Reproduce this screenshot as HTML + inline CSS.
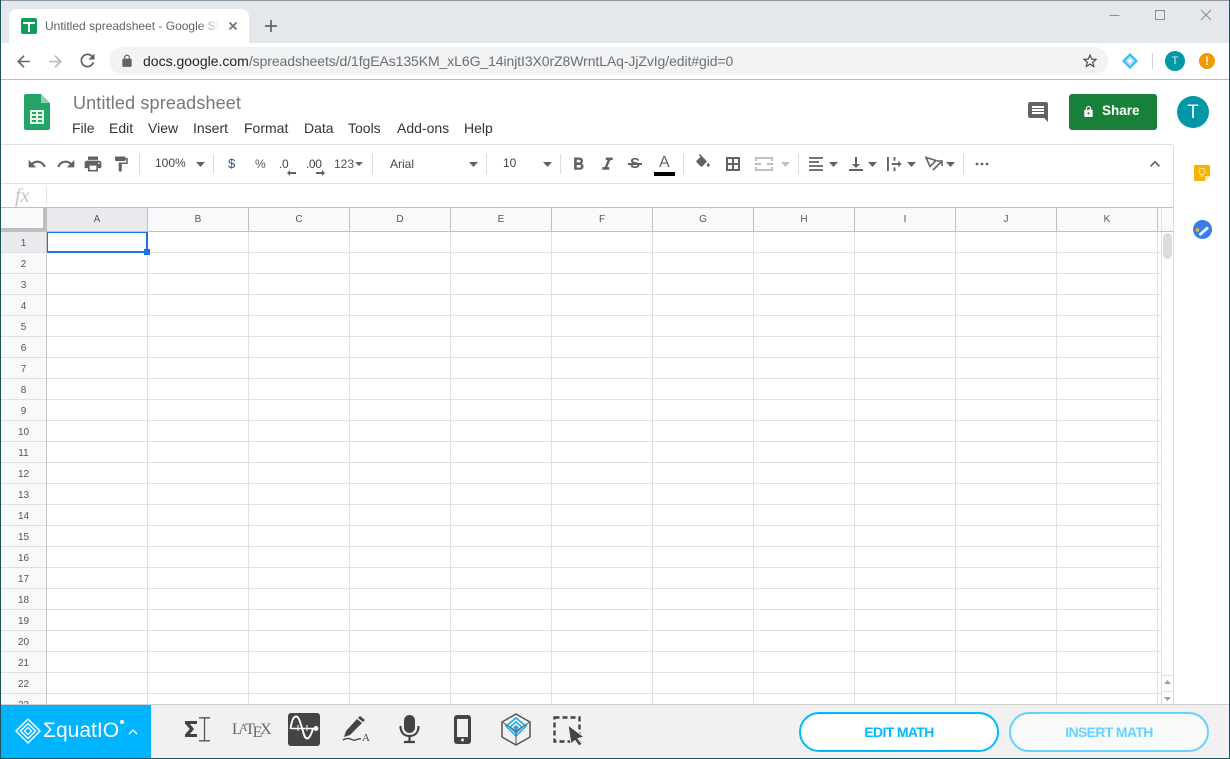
<!DOCTYPE html>
<html><head><meta charset="utf-8"><style>
html,body{margin:0;padding:0;background:#fff}
body{width:1230px;height:759px;position:relative;overflow:hidden;font-family:"Liberation Sans",sans-serif}
.a,svg,.t{position:absolute}
svg{overflow:visible}
.t{white-space:nowrap;line-height:16px}
.m{font-size:14px;color:#333;top:120px}
.sep{position:absolute;width:1px;background:#dadce0;top:154px;height:20px}
.ch{position:absolute;top:208px;height:23px;width:100px;border-right:1px solid #c0c0c0;background:#f8f9fa;text-align:center;font-size:10px;line-height:24px;color:#555}
.r{position:absolute;left:1px;width:45px;height:20px;border-bottom:1px solid #e0e0e0;background:#f8f9fa;text-align:center;font-size:10px;line-height:24px;color:#555}
.btn{position:absolute;top:712px;width:196px;height:36px;border:2px solid #00b9ff;border-radius:20px;background:#fff;color:#00b9ff;font-size:14px;font-weight:bold;text-align:center;line-height:36px;letter-spacing:-.65px}
.g{fill:#5f6368}
</style></head><body>
<div class="a" style="left:0;top:0;width:1230px;height:43px;background:#e4e7eb;border-top:1px solid #8f9a9c;box-sizing:border-box"></div>
<div class="a" style="left:9px;top:9px;width:240px;height:34px;background:#fff;border-radius:8px 8px 0 0"></div>
<div class="a" style="left:21px;top:18px;width:16px;height:16px;background:#0f9d58;border-radius:2px"></div>
<div class="a" style="left:23px;top:22px;width:12px;height:2px;background:#fff"></div>
<div class="a" style="left:28px;top:22px;width:2px;height:10px;background:#fff"></div>
<div class="t" style="left:45px;top:18px;width:175px;overflow:hidden;font-size:12px;color:#5f6368;-webkit-mask-image:linear-gradient(90deg,#000 88%,transparent);mask-image:linear-gradient(90deg,#000 88%,transparent)">Untitled spreadsheet - Google Sheets</div>
<svg style="left:227px;top:20px" width="12" height="12" viewBox="0 0 12 12"><path d="M2.500 2.500l7 7M9.500 2.500l-7 7" stroke="#6b6f73" stroke-width="1.600"/></svg>
<svg style="left:264px;top:19px" width="14" height="14" viewBox="0 0 14 14"><path d="M7 1v12M1 7h12" stroke="#5f6368" stroke-width="1.700"/></svg>
<svg style="left:1100px;top:5px" width="120" height="20" viewBox="0 0 120 20"><path d="M9.500 10.500h10" stroke="#8a8d91"/><rect x="55.500" y="5.500" width="9" height="9" fill="none" stroke="#8a8d91"/><path d="M101 5l10 10M111 5l-10 10" stroke="#8a8d91"/></svg>

<div class="a" style="left:0;top:79px;width:1230px;height:1px;background:#b9bbbd"></div>
<svg style="left:14px;top:52px" width="19" height="19" viewBox="0 0 24 24"><path class="g" d="M20 11H7.830l5.590-5.590L12 4l-8 8 8 8 1.410-1.410L7.830 13H20v-2z"/></svg>
<svg style="left:46px;top:52px" width="19" height="19" viewBox="0 0 24 24"><path fill="#b4b7ba" d="M4 11h12.170l-5.590-5.590L12 4l8 8-8 8-1.410-1.410L16.170 13H4v-2z"/></svg>
<svg style="left:77px;top:50px" width="21" height="21" viewBox="0 0 24 24"><path class="g" d="M17.650 6.350C16.200 4.900 14.210 4 12 4c-4.420 0-7.990 3.580-7.990 8s3.570 8 7.990 8c3.730 0 6.840-2.550 7.730-6h-2.080c-.82 2.330-3.040 4-5.650 4-3.310 0-6-2.690-6-6s2.690-6 6-6c1.660 0 3.140.69 4.220 1.780L13 11h7V4l-2.350 2.350z"/></svg>
<div class="a" style="left:109px;top:47px;width:999px;height:28px;background:#f1f3f4;border-radius:14px"></div>
<svg style="left:120px;top:54px" width="14" height="14" viewBox="0 0 24 24"><path class="g" d="M18 8h-1V6c0-2.760-2.240-5-5-5S7 3.240 7 6v2H6c-1.100 0-2 .9-2 2v10c0 1.100.9 2 2 2h12c1.100 0 2-.9 2-2V10c0-1.100-.9-2-2-2zM15.100 8H8.900V6c0-1.710 1.390-3.100 3.100-3.100 1.710 0 3.100 1.390 3.100 3.100v2z"/></svg>
<div class="t" style="left:143px;top:53px;font-size:14px;color:#1f2225">docs.google.com<span style="color:#6b6f73;letter-spacing:-.085px">/spreadsheets/d/1fgEAs135KM_xL6G_14injtI3X0rZ8WrntLAq-JjZvIg/edit#gid=0</span></div>
<svg style="left:1081px;top:52px" width="18" height="18" viewBox="0 0 24 24"><path fill="#4a4d51" d="M22 9.240l-7.190-.62L12 2 9.190 8.630 2 9.240l5.460 4.730L5.820 21 12 17.270 18.180 21l-1.630-7.030L22 9.240zM12 15.400l-3.760 2.270 1-4.280-3.320-2.880 4.380-.38L12 6.100l1.710 4.040 4.380.38-3.320 2.880 1 4.280L12 15.400z"/></svg>
<svg style="left:1121px;top:52px" width="18" height="18" viewBox="0 0 18 18"><path d="M9 1l8 8-8 8-8-8z" fill="#3db8f5"/><path d="M9 4l5 5-5 5-5-5z" fill="#a5e2fb"/><path d="M9 6.500L11.500 9 9 11.500 6.500 9z" fill="#fff"/></svg>
<div class="a" style="left:1152px;top:53px;width:1px;height:16px;background:#d0d3d6"></div>
<div class="a" style="left:1165px;top:51px;width:20px;height:20px;border-radius:50%;background:#0097a7;color:#d8f1f4;text-align:center;font-size:11px;line-height:20px">T</div>
<div class="a" style="left:1199px;top:53px;width:16px;height:16px;border-radius:50%;background:#f29900;color:#fff;text-align:center;font-size:12px;font-weight:bold;line-height:16px">!</div>

<!-- sheets header -->
<svg style="left:24px;top:94px" width="26" height="36" viewBox="0 0 26 36"><path d="M2 0h15l9 9v25a2 2 0 0 1-2 2H2a2 2 0 0 1-2-2V2a2 2 0 0 1 2-2z" fill="#23a566"/><path d="M17 0l9 9h-9z" fill="#8ed1b1"/><path fill-rule="evenodd" d="M6 16h14v14H6z M8 18v2h4v-2z M14 18v2h4v-2z M8 22v2h4v-2z M14 22v2h4v-2z M8 26v2h4v-2z M14 26v2h4v-2z" fill="#e6f4ec"/></svg>
<div class="t" style="left:73px;top:93px;font-size:18px;line-height:20px;color:#777;letter-spacing:.15px">Untitled spreadsheet</div>
<div class="t m" style="left:72px">File</div><div class="t m" style="left:109px">Edit</div><div class="t m" style="left:148px">View</div><div class="t m" style="left:193px">Insert</div><div class="t m" style="left:244px">Format</div><div class="t m" style="left:304px">Data</div><div class="t m" style="left:348px">Tools</div><div class="t m" style="left:397px">Add-ons</div><div class="t m" style="left:464px">Help</div>
<svg style="left:1026px;top:100px" width="24" height="24" viewBox="0 0 24 24"><path class="g" d="M21.990 4c0-1.100-.89-2-1.990-2H4c-1.100 0-2 .9-2 2v12c0 1.100.9 2 2 2h14l4 4-.01-18zM18 14H6v-2h12v2zm0-3H6V9h12v2zm0-3H6V6h12v2z"/></svg>
<div class="a" style="left:1069px;top:94px;width:88px;height:36px;background:#188038;border-radius:3px"></div>
<svg style="left:1084px;top:106px" width="9" height="11" viewBox="4 1 16 21"><path fill="#fff" d="M18 8h-1V6c0-2.760-2.240-5-5-5S7 3.240 7 6v2H6c-1.100 0-2 .9-2 2v10c0 1.100.9 2 2 2h12c1.100 0 2-.9 2-2V10c0-1.100-.9-2-2-2zm-6 9c-1.100 0-2-.9-2-2s.9-2 2-2 2 .9 2 2-.9 2-2 2zm3.100-9H8.900V6c0-1.710 1.390-3.100 3.100-3.100 1.710 0 3.100 1.390 3.100 3.100v2z"/></svg>
<div class="t" style="left:1102px;top:103px;font-size:13.5px;font-weight:bold;color:#fff">Share</div>
<div class="a" style="left:1177px;top:96px;width:32px;height:32px;border-radius:50%;background:#0097a7;color:#fff;text-align:center;font-size:19px;line-height:33px">T</div>
<div class="a" style="left:1px;top:144px;width:1172px;height:1px;background:#e0e0e0"></div>

<!-- toolbar -->
<svg style="left:27px;top:154px" width="20" height="20" viewBox="0 0 24 24"><path class="g" d="M12.500 8c-2.650 0-5.050.99-6.900 2.600L2 7v9h9l-3.620-3.620c1.390-1.160 3.160-1.880 5.120-1.880 3.540 0 6.550 2.310 7.600 5.500l2.370-.78C21.080 11.030 17.150 8 12.500 8z"/></svg>
<svg style="left:56px;top:154px" width="20" height="20" viewBox="0 0 24 24"><path class="g" d="M18.400 10.600C16.550 8.990 14.150 8 11.500 8c-4.650 0-8.580 3.030-9.960 7.220L3.900 16c1.050-3.190 4.050-5.500 7.600-5.500 1.950 0 3.730.72 5.120 1.880L13 16h9V7l-3.600 3.600z"/></svg>
<svg style="left:83px;top:154px" width="20" height="20" viewBox="0 0 24 24"><path class="g" d="M19 8H5c-1.660 0-3 1.340-3 3v6h4v4h12v-4h4v-6c0-1.660-1.340-3-3-3zm-3 11H8v-5h8v5zm3-7c-.55 0-1-.45-1-1s.45-1 1-1 1 .45 1 1-.45 1-1 1zm-1-9H6v4h12V3z"/></svg>
<svg style="left:112px;top:155px" width="18" height="18" viewBox="0 0 24 24"><path class="g" d="M18 4V3c0-.55-.45-1-1-1H5c-.55 0-1 .45-1 1v4c0 .55.45 1 1 1h12c.55 0 1-.45 1-1V6h1v4H9v11c0 .55.45 1 1 1h2c.55 0 1-.45 1-1v-9h8V4h-3z"/></svg>
<div class="sep" style="left:139px"></div>
<div class="t" style="left:155px;top:155px;font-size:12px;color:#444">100%</div>
<svg style="left:196px;top:162px" width="9" height="5" viewBox="0 0 9 5"><path class="g" d="M0 0h9L4.500 5z"/></svg>
<div class="sep" style="left:213px"></div>
<div class="t" style="left:228px;top:156px;font-size:13px;color:#2b5797">$</div>
<div class="t" style="left:255px;top:156px;font-size:12px;color:#555">%</div>
<div class="t" style="left:279px;top:156px;font-size:12px;color:#444;letter-spacing:-.3px">.0</div>
<svg style="left:287px;top:170px" width="9" height="6" viewBox="0 0 9 6"><path class="g" d="M0 3l3-3v2h6v2H3v2z"/></svg>
<div class="t" style="left:306px;top:156px;font-size:12px;color:#444;letter-spacing:-.4px">.00</div>
<svg style="left:316px;top:170px" width="9" height="6" viewBox="0 0 9 6"><path class="g" d="M9 3L6 0v2H0v2h6v2z"/></svg>
<div class="t" style="left:334px;top:156px;font-size:12px;color:#555">123</div>
<svg style="left:355px;top:162px" width="8" height="4" viewBox="0 0 8 4"><path class="g" d="M0 0h8L4 4z"/></svg>
<div class="sep" style="left:372px"></div>
<div class="t" style="left:390px;top:156px;font-size:12px;color:#444">Arial</div>
<svg style="left:469px;top:162px" width="9" height="5" viewBox="0 0 9 5"><path class="g" d="M0 0h9L4.500 5z"/></svg>
<div class="sep" style="left:486px"></div>
<div class="t" style="left:503px;top:155px;font-size:12px;color:#444">10</div>
<svg style="left:543px;top:162px" width="9" height="5" viewBox="0 0 9 5"><path class="g" d="M0 0h9L4.500 5z"/></svg>
<div class="sep" style="left:560px"></div>
<svg style="left:568px;top:154px" width="21" height="21" viewBox="0 0 24 24"><path class="g" d="M15.600 10.790c.97-.67 1.650-1.770 1.650-2.790 0-2.260-1.750-4-4-4H7v14h7.040c2.090 0 3.710-1.700 3.710-3.790 0-1.520-.86-2.820-2.150-3.420zM10 6.500h3c.83 0 1.500.67 1.500 1.500s-.67 1.500-1.500 1.500h-3v-3zm3.500 9H10v-3h3.500c.83 0 1.500.67 1.500 1.500s-.67 1.500-1.500 1.500z"/></svg>
<svg style="left:597px;top:154px" width="21" height="21" viewBox="0 0 24 24"><path class="g" d="M10 4v3h2.210l-3.420 8H6v3h8v-3h-2.210l3.420-8H18V4z"/></svg>
<div class="t" style="left:630px;top:156px;font-size:15px;font-weight:bold;color:#5f6368">S</div>
<div class="a" style="left:628px;top:163px;width:14px;height:2px;background:#5f6368"></div>
<div class="t" style="left:659px;top:155px;font-size:16px;color:#5f6368">A</div>
<div class="a" style="left:654px;top:172px;width:21px;height:4px;background:#000"></div>
<div class="sep" style="left:683px"></div>
<svg style="left:694px;top:154px" width="18" height="18" viewBox="0 0 24 24"><path class="g" d="M16.560 8.940L7.620 0 6.210 1.410l2.380 2.380-5.150 5.150c-.59.59-.59 1.540 0 2.120l5.500 5.500c.29.29.68.44 1.060.44s.77-.15 1.060-.44l5.500-5.500c.59-.58.59-1.530 0-2.120zM19 11.500s-2 2.170-2 3.500c0 1.100.9 2 2 2s2-.9 2-2c0-1.330-2-3.500-2-3.500z"/></svg>
<svg style="left:726px;top:157px" width="14" height="14" viewBox="0 0 14 14"><path fill="none" stroke="#5f6368" stroke-width="2" d="M1 1h12v12H1zM7 1v12M1 7h12"/></svg>
<svg style="left:755px;top:157px" width="18" height="14" viewBox="0 0 18 14" fill="none" stroke="#bdc1c6" stroke-width="2"><path d="M1 4V1h16v3M1 10v3h16v-3M0 7h6M12 7h6"/></svg>
<svg style="left:781px;top:162px" width="9" height="5" viewBox="0 0 9 5"><path fill="#bdc1c6" d="M0 0h9L4.500 5z"/></svg>
<div class="sep" style="left:798px"></div>
<svg style="left:809px;top:157px" width="14" height="14" viewBox="0 0 14 14"><path fill="none" stroke="#5f6368" stroke-width="1.800" d="M0 1h14M0 5h10M0 9h14M0 13h14"/></svg>
<svg style="left:829px;top:162px" width="9" height="5" viewBox="0 0 9 5"><path class="g" d="M0 0h9L4.500 5z"/></svg>
<svg style="left:849px;top:157px" width="14" height="14" viewBox="0 0 14 14"><path class="g" d="M6 0h2v7h3l-4 4-4-4h3zM0 12h14v2H0z"/></svg>
<svg style="left:868px;top:162px" width="9" height="5" viewBox="0 0 9 5"><path class="g" d="M0 0h9L4.500 5z"/></svg>
<svg style="left:887px;top:157px" width="15" height="15" viewBox="0 0 16 16"><path class="g" d="M0 0h2v15H0zM7 0h2v4H7zM7 11h2v4H7zM5 6.500h7V4l3.500 3.500L12 11V8.500H5z"/></svg>
<svg style="left:907px;top:162px" width="9" height="5" viewBox="0 0 9 5"><path class="g" d="M0 0h9L4.500 5z"/></svg>
<svg style="left:925px;top:156px" width="18" height="16" viewBox="0 0 18 16" fill="none" stroke="#5f6368" stroke-width="1.600"><path d="M1 1.500l10 3-6 6zM8 14L16 6M12 5h5v5"/></svg>
<svg style="left:946px;top:162px" width="9" height="5" viewBox="0 0 9 5"><path class="g" d="M0 0h9L4.500 5z"/></svg>
<div class="sep" style="left:963px"></div>
<svg style="left:975px;top:162px" width="14" height="4" viewBox="0 0 14 4"><circle class="g" cx="2" cy="2" r="1.400"/><circle class="g" cx="7" cy="2" r="1.400"/><circle class="g" cx="12" cy="2" r="1.400"/></svg>
<svg style="left:1145px;top:154px" width="20" height="20" viewBox="0 0 24 24"><path class="g" d="M12 8l-6 6 1.410 1.410L12 10.830l4.590 4.580L18 14z"/></svg>
<div class="a" style="left:1px;top:183px;width:1172px;height:1px;background:#e0e0e0"></div>

<!-- formula bar -->
<div class="t" style="left:15px;top:186px;font-family:'Liberation Serif',serif;font-style:italic;font-size:20px;line-height:20px;color:#c4c4c4">fx</div>
<div class="a" style="left:46px;top:187px;width:1px;height:17px;background:#e0e0e0"></div>

<!-- grid headers -->
<div class="a" style="left:1px;top:207px;width:1172px;height:1px;background:#c0c0c0"></div>
<div class="a" style="left:1px;top:208px;width:46px;height:23px;background:#f8f9fa"></div>
<div class="a" style="left:43px;top:208px;width:4px;height:24px;background:#bdbdbd"></div>
<div class="a" style="left:1px;top:228px;width:46px;height:4px;background:#bdbdbd"></div>
<div class="ch" style="left:47px;background:#e8eaed">A</div>
<div class="ch" style="left:148px">B</div><div class="ch" style="left:249px">C</div><div class="ch" style="left:350px">D</div><div class="ch" style="left:451px">E</div><div class="ch" style="left:552px">F</div><div class="ch" style="left:653px">G</div><div class="ch" style="left:754px">H</div><div class="ch" style="left:855px">I</div><div class="ch" style="left:956px">J</div><div class="ch" style="left:1057px">K</div>
<div class="a" style="left:1158px;top:208px;width:15px;height:23px;background:#f8f9fa"></div>
<div class="a" style="left:1161px;top:208px;width:1px;height:23px;background:#e1e1e1"></div>
<div class="a" style="left:1px;top:231px;width:1172px;height:1px;background:#c0c0c0"></div>

<!-- cells -->
<div class="a" style="left:47px;top:232px;width:1114px;height:472px;background-image:linear-gradient(#e1e1e1 1px,transparent 1px),linear-gradient(90deg,#e1e1e1 1px,transparent 1px);background-size:101px 21px;background-position:0 20px,100px 0"></div>
<div class="a" style="left:46px;top:232px;width:1px;height:472px;background:#c8c8c8"></div>
<div class="a" style="left:1161px;top:232px;width:1px;height:472px;background:#e1e1e1"></div>
<div class="a" style="left:1px;top:232px;width:45px;height:472px;overflow:hidden">
<div class="r" style="left:0;top:0;background:#e8eaed">1</div><div class="r" style="left:0;top:21px">2</div><div class="r" style="left:0;top:42px">3</div><div class="r" style="left:0;top:63px">4</div><div class="r" style="left:0;top:84px">5</div><div class="r" style="left:0;top:105px">6</div><div class="r" style="left:0;top:126px">7</div><div class="r" style="left:0;top:147px">8</div><div class="r" style="left:0;top:168px">9</div><div class="r" style="left:0;top:189px">10</div><div class="r" style="left:0;top:210px">11</div><div class="r" style="left:0;top:231px">12</div><div class="r" style="left:0;top:252px">13</div><div class="r" style="left:0;top:273px">14</div><div class="r" style="left:0;top:294px">15</div><div class="r" style="left:0;top:315px">16</div><div class="r" style="left:0;top:336px">17</div><div class="r" style="left:0;top:357px">18</div><div class="r" style="left:0;top:378px">19</div><div class="r" style="left:0;top:399px">20</div><div class="r" style="left:0;top:420px">21</div><div class="r" style="left:0;top:441px">22</div><div class="r" style="left:0;top:462px">23</div>
</div>
<div class="a" style="left:47px;top:232px;width:98px;height:18px;border:2px solid #1a73e8;border-left-width:1px;border-top-width:1px"></div>
<div class="a" style="left:144px;top:249px;width:6px;height:6px;background:#1a73e8"></div>

<!-- scrollbar -->
<div class="a" style="left:1163px;top:233px;width:9px;height:26px;background:#dadce0;border-radius:5px"></div>
<div class="a" style="left:1161px;top:675px;width:12px;height:29px;border-top:1px solid #e1e1e1;background:#fff"></div>
<div class="a" style="left:1161px;top:675px;width:1px;height:29px;background:#e1e1e1"></div>
<div class="a" style="left:1161px;top:691px;width:12px;height:1px;background:#e1e1e1"></div>
<svg style="left:1164px;top:680px" width="7" height="4" viewBox="0 0 9 5"><path fill="#a0a0a0" d="M0 5h9L4.500 0z"/></svg>
<svg style="left:1164px;top:697px" width="7" height="4" viewBox="0 0 9 5"><path fill="#a0a0a0" d="M0 0h9L4.500 5z"/></svg>

<!-- side panel -->
<div class="a" style="left:1173px;top:145px;width:1px;height:560px;background:#dadce0"></div>
<svg style="left:1194px;top:165px" width="16" height="16" viewBox="0 0 16 16"><path d="M1 0h14a1 1 0 0 1 1 1v10l-5 5H1a1 1 0 0 1-1-1V1a1 1 0 0 1 1-1z" fill="#f4b400"/><path d="M16 11h-5v5z" fill="#fde293"/><circle cx="8" cy="6.500" r="3" fill="none" stroke="#fde9a9" stroke-width="1"/><path d="M6.500 11h3" stroke="#fde9a9" stroke-width="1.200"/></svg>
<svg style="left:1193px;top:220px" width="19" height="19" viewBox="0 0 19 19"><circle cx="9.500" cy="9.500" r="9.500" fill="#3b7de9"/><path d="M6.500 15L15 7.500" stroke="#fff" stroke-width="2.600"/><circle cx="4.500" cy="10" r="1.700" fill="#fbbc04"/></svg>

<!-- equatio bar -->
<div class="a" style="left:0;top:704px;width:1230px;height:55px;background:#f1f1f1;border-top:1px solid #d0d0d0;box-sizing:border-box"></div>
<div class="a" style="left:1px;top:705px;width:150px;height:53px;background:#00b4ff"></div>
<svg style="left:15px;top:718px" width="26" height="26" viewBox="0 0 26 26" fill="none" stroke="#fff" stroke-width="1.500"><path d="M13 1l12 12-12 12L1 13z" stroke-linejoin="round"/><path d="M13 5.500l7.500 7.500-7.500 7.500L5.500 13z"/><path d="M13 9.500l3.500 3.500-3.500 3.500L9.500 13z" stroke-width="1.200"/></svg>
<div class="t" style="left:43px;top:718px;font-size:21px;line-height:26px;color:#fff">Σquat<span>IO</span></div>
<div class="a" style="left:120px;top:720px;width:2px;height:2px;border:1px solid #fff;border-radius:50%;background:#fff"></div>
<svg style="left:128px;top:729px" width="10" height="6" viewBox="0 0 10 6"><path d="M1 5l4-4 4 4" fill="none" stroke="#fff" stroke-width="1.300"/></svg>

<svg style="left:184px;top:717px" width="28" height="28" viewBox="0 0 28 28"><path d="M1 4h12v3H6l4 5-4 5h7v3H1v-2.500L5.800 12 1 6.500z" fill="#444"/><path d="M15 0.800h11M20.500 1v22.500M15 23.800h11" stroke="#555" stroke-width="1.300" fill="none"/></svg>
<div class="t" style="left:232px;top:721px;font-family:'Liberation Serif',serif;font-size:16px;line-height:18px;color:#666;letter-spacing:-2.300px;width:40px">L<span style="font-size:11px;position:relative;top:-3px">A</span>T<span style="position:relative;top:3px">E</span>X</div>
<div class="a" style="left:288px;top:713px;width:32px;height:33px;background:#444;border-radius:3px"></div>
<svg style="left:288px;top:713px" width="32" height="33" viewBox="0 0 32 33" fill="none" stroke="#fff" stroke-width="1.900"><path d="M2.500 16C3.500 9 5 3.500 8 3.500S12 9 14 15s2.500 10.500 5 10.500S24 20 25 15"/><path d="M3 15.500h25" stroke-width="1.400"/><circle cx="28" cy="15.500" r="1.500" fill="#fff"/><path d="M10 12v6M19 12v6" stroke-width="1"/></svg>
<svg style="left:342px;top:715px" width="30" height="28" viewBox="0 0 30 28"><path d="M18 1l5 4-2 2-5-4zM15 4l5 4L8 20l-6 2 2-6z" fill="#444"/><path d="M1 25c5-3 7-1 10 0s5-2 8-1" stroke="#444" fill="none" stroke-width="1.400"/><text x="20" y="26" font-family="Liberation Serif,serif" font-size="11" fill="#444">A</text></svg>
<svg style="left:399px;top:715px" width="21" height="29" viewBox="0 0 21 29"><rect x="5" y="0" width="11" height="18" rx="5.500" fill="#444"/><path d="M1.500 11c0 6.500 3.500 10 9 10s9-3.500 9-10M10.500 21v5M5 27h11" fill="none" stroke="#444" stroke-width="2.200"/></svg>
<svg style="left:454px;top:715px" width="17" height="29" viewBox="0 0 17 29"><rect x="0" y="0" width="17" height="29" rx="3" fill="#444"/><rect x="3" y="4" width="11" height="18" fill="#f1f1f1"/><circle cx="8.500" cy="25" r="1.500" fill="#f1f1f1"/></svg>
<svg style="left:501px;top:713px" width="30" height="33" viewBox="0 0 30 33"><path d="M15 1l14 8v15l-14 8-14-8V9z" fill="none" stroke="#555" stroke-width="1.500"/><path d="M15 5l10 8-10 10-10-10z" fill="none" stroke="#1aa9ee" stroke-width="1.500"/><path d="M15 9l6 5-6 6-6-6z" fill="none" stroke="#1aa9ee" stroke-width="1.500"/><path d="M15 12l3 2.500-3 3-3-3z" fill="#1aa9ee"/><path d="M1 9l14 9 14-9M15 18v14" fill="none" stroke="#555" stroke-width="1"/></svg>
<svg style="left:553px;top:715px" width="32" height="31" viewBox="0 0 32 31"><rect x="1.500" y="2.500" width="25" height="24" fill="none" stroke="#444" stroke-width="2.400" stroke-dasharray="5 3"/><path d="M15 10l16 12-6 1.500 4 5.500-3 2-4-5.500-4 3.500z" fill="#444" stroke="#f1f1f1" stroke-width="1"/></svg>

<div class="btn" style="left:799px">EDIT MATH</div>
<div class="btn" style="left:1009px;background:#f8f9f9;color:#66d2ff;border-color:#66d2ff">INSERT MATH</div>

<!-- window border -->
<div class="a" style="left:0;top:0;width:1px;height:759px;background:#1d5558"></div>
<div class="a" style="left:1229px;top:0;width:1px;height:759px;background:#1d5558"></div>
<div class="a" style="left:0;top:758px;width:1230px;height:1px;background:#1d5558"></div>
</body></html>
